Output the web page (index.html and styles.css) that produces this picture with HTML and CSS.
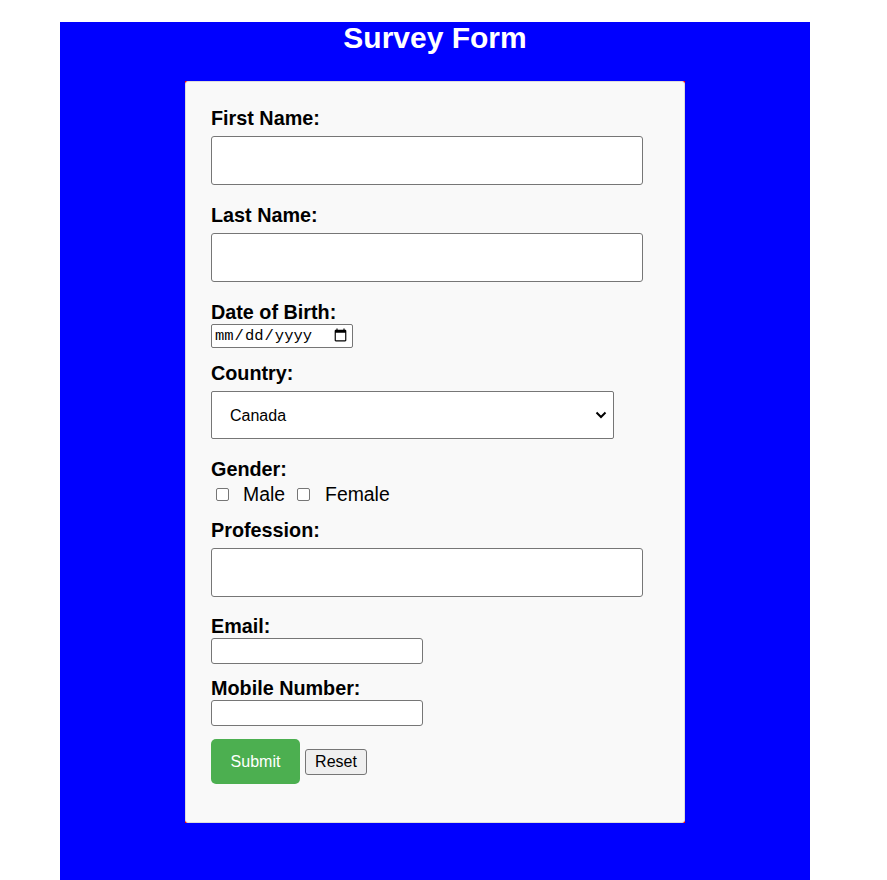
FILE: index.html
```html
<!DOCTYPE html>
<html lang="en">
<head>
<meta charset="utf-8">
<title>Survey Form</title>
<link rel="stylesheet" href="styles.css">
</head>
<body>
<div class="page">
  <h1 class="title">Survey Form</h1>
  <div class="frame">
    <form class="card">
      <label class="lbl" for="fname">First Name:</label>
      <input class="field big gap-in" type="text" id="fname">

      <label class="lbl gap-lg" for="lname">Last Name:</label>
      <input class="field big gap-in" type="text" id="lname">

      <label class="lbl gap-lg" for="dob">Date of Birth:</label>
      <input class="date gap-tight" type="date" id="dob">

      <label class="lbl gap-md" for="country">Country:</label>
      <select class="select gap-in" id="country">
        <option>Canada</option>
        <option>United States</option>
        <option>India</option>
      </select>

      <label class="lbl gap-lg">Gender:</label>
      <div class="checks">
        <input class="cb cb-first" type="checkbox" id="male"><label class="cb-text" for="male">Male</label>
        <input class="cb cb-second" type="checkbox" id="female"><label class="cb-text" for="female">Female</label>
      </div>

      <label class="lbl gap-prof" for="prof">Profession:</label>
      <input class="field big gap-in" type="text" id="prof">

      <label class="lbl gap-email" for="email">Email:</label>
      <input class="field small gap-tight" type="email" id="email">

      <label class="lbl gap-md2" for="mobile">Mobile Number:</label>
      <input class="field small gap-tight" type="tel" id="mobile">

      <div class="actions">
        <button class="submit" type="submit">Submit</button>
        <button class="reset" type="reset">Reset</button>
      </div>
    </form>
  </div>
</div>
</body>
</html>
```

FILE: styles.css
```css
html, body {
  margin: 0;
  padding: 0;
  background: #ffffff;
}

body {
  font-family: "Liberation Sans", Arial, sans-serif;
  color: #000;
}

.page {
  width: 750px;
  margin: 22px 0 0 60px;
  padding-bottom: 80px;
  background: #0000ff;
}

.title {
  margin: 0;
  font-size: 30px;
  line-height: 32px;
  font-weight: bold;
  color: #ffffff;
  text-align: center;
}

.frame {
  width: 500px;
  margin: 27px auto 0;
  background: #ff0000;
}

.card {
  display: flex;
  flex-direction: column;
  align-items: flex-start;
  background: #f9f9f9;
  border: 1px solid #dddddd;
  border-radius: 3px;
  padding: 25px 25px 38px;
}

.lbl {
  font-size: 19.8px;
  font-weight: bold;
  line-height: 22px;
}

.gap-in { margin-top: 7px; }
.gap-lg { margin-top: 19px; }
.gap-md { margin-top: 14px; }
.gap-md2 { margin-top: 13px; }
.gap-tight { margin-top: 1px; }
.gap-prof { margin-top: 14px; }
.gap-email { margin-top: 18px; }

.field {
  box-sizing: border-box;
  border: 1px solid #767676;
  border-radius: 3px;
  background: #ffffff;
  font-family: "Liberation Sans", Arial, sans-serif;
  font-size: 16px;
  padding: 0 8px;
  margin-bottom: 0;
  margin-left: 0;
  margin-right: 0;
}

.big {
  width: 432px;
  height: 49px;
}

.small {
  width: 212px;
  height: 26px;
}

.date {
  box-sizing: border-box;
  width: 142px;
  height: 24px;
  margin-left: 0;
  margin-right: 0;
  margin-bottom: 0;
  padding: 0 2px;
  border: 1px solid #767676;
  border-radius: 2px;
  background: #ffffff;
  font-family: "Liberation Mono", "DejaVu Sans Mono", monospace;
  font-size: 15.5px;
}

.select {
  box-sizing: border-box;
  width: 403px;
  height: 48px;
  margin-left: 0;
  margin-right: 0;
  margin-bottom: 0;
  padding: 0 24px 0 18px;
  border: 1px solid #767676;
  border-radius: 2px;
  -webkit-appearance: none;
  appearance: none;
  background-color: #ffffff;
  background-image: url("data:image/svg+xml,%3Csvg xmlns='http://www.w3.org/2000/svg' width='12' height='8' viewBox='0 0 12 8'%3E%3Cpath d='M1.5 1.5 L6 6 L10.5 1.5' fill='none' stroke='%23000' stroke-width='2'/%3E%3C/svg%3E");
  background-repeat: no-repeat;
  background-position: right 6px center;
  background-size: 12px 8px;
  font-family: "Liberation Sans", Arial, sans-serif;
  font-size: 16px;
  color: #000;
}

.checks {
  display: flex;
  align-items: center;
  height: 22px;
  margin-top: 3px;
}

.cb {
  -webkit-appearance: none;
  appearance: none;
  box-sizing: border-box;
  width: 13px;
  height: 13px;
  margin: 0;
  border: 1px solid #767676;
  border-radius: 2px;
  background: #ffffff;
}

.cb:checked {
  background: #0075ff;
  border-color: #0075ff;
}

.cb-first {
  margin-left: 5px;
  margin-right: 14px;
}

.cb-second {
  margin-left: 12px;
  margin-right: 15px;
}

.cb-text {
  font-size: 19.4px;
  line-height: 22px;
}

.actions {
  display: flex;
  align-items: center;
  gap: 5px;
  margin-top: 13px;
}

.submit {
  box-sizing: border-box;
  width: 89px;
  height: 45px;
  border: none;
  border-radius: 5px;
  background: #4caf50;
  color: #ffffff;
  font-family: "Liberation Sans", Arial, sans-serif;
  font-size: 16px;
  padding: 0;
  margin: 0;
}

.reset {
  box-sizing: border-box;
  width: 62px;
  height: 26px;
  margin: 1px 0 0;
  padding: 0;
  border: 1px solid #767676;
  border-radius: 3px;
  background: #efefef;
  color: #000;
  font-family: "Liberation Sans", Arial, sans-serif;
  font-size: 16px;
}
```
